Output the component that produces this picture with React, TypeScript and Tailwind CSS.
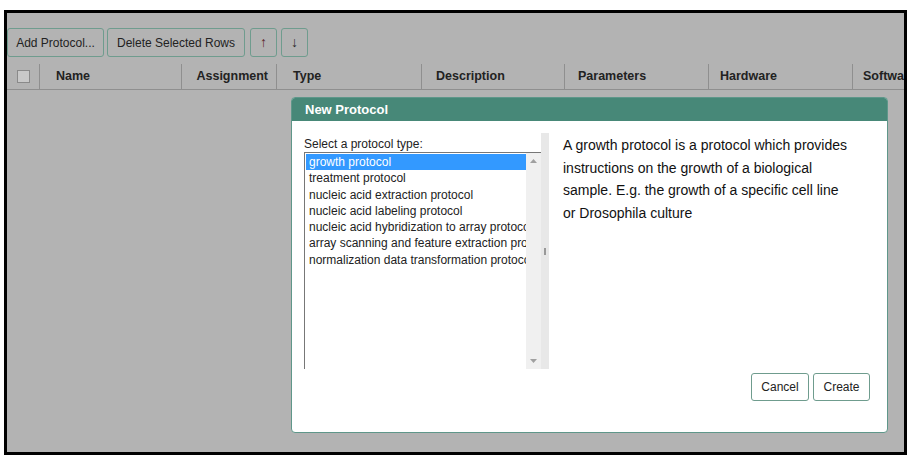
import React from "react";

const font = { fontFamily: '"Liberation Sans", Arial, sans-serif' };

const items = [
  "growth protocol",
  "treatment protocol",
  "nucleic acid extraction protocol",
  "nucleic acid labeling protocol",
  "nucleic acid hybridization to array protocol",
  "array scanning and feature extraction protocol",
  "normalization data transformation protocol",
];

export default function App() {
  return (
    <div className="w-[911px] h-[465px] bg-white relative overflow-hidden text-[#222]" style={font}>
      <div className="absolute left-[4px] top-[10px] w-[903px] h-[445px] border-[3px] border-black bg-[#b3b3b3] overflow-hidden">
        {/* toolbar */}
        <div className="flex gap-[3px] pt-[15px]">
          <button className="h-[29px] w-[97px] border border-[#6f9c8e] rounded-[3px] text-[12px] text-[#222]">Add Protocol...</button>
          <button className="h-[29px] w-[138px] border border-[#6f9c8e] rounded-[3px] text-[12px] text-[#222]">Delete Selected Rows</button>
          <button className="ml-[2px] h-[29px] w-[27px] border border-[#6f9c8e] rounded-[3px] text-[14px] text-[#5a2626]">↑</button>
          <button className="ml-[1px] h-[29px] w-[27px] border border-[#6f9c8e] rounded-[3px] text-[14px] text-[#2a2a2a]">↓</button>
        </div>
        {/* header */}
        <div className="mt-[7px] h-[26px] flex border-b border-[#8f8f8f] text-[12.5px] font-bold text-[#222] whitespace-nowrap">
          <div className="w-[33px] shrink-0 flex items-center justify-center border-r border-[#8f8f8f]">
            <div className="w-[13px] h-[13px] bg-[#c9c9c9] border border-[#8a8a8a]" />
          </div>
          <div className="w-[142px] shrink-0 flex items-center pl-[16px] border-r border-[#8f8f8f]">Name</div>
          <div className="w-[95px] shrink-0 flex items-center justify-end pr-[8px] border-r border-[#8f8f8f]">Assignment</div>
          <div className="w-[145px] shrink-0 flex items-center pl-[16px] border-r border-[#8f8f8f]">Type</div>
          <div className="w-[143px] shrink-0 flex items-center pl-[14px] border-r border-[#8f8f8f]">Description</div>
          <div className="w-[144px] shrink-0 flex items-center pl-[13px] border-r border-[#8f8f8f]">Parameters</div>
          <div className="w-[144px] shrink-0 flex items-center pl-[11px] border-r border-[#8f8f8f]">Hardware</div>
          <div className="w-[120px] shrink-0 flex items-center pl-[10px]">Software</div>
        </div>
      </div>

      {/* modal dialog */}
      <div className="absolute left-[291px] top-[97px] w-[597px] h-[336px] bg-white border border-[#5f978a] rounded-[4px] overflow-hidden flex flex-col">
        <div className="h-[23px] bg-[#478878] text-white font-bold text-[13px] flex items-center pl-[13px]">New Protocol</div>
        <div className="flex-1 flex pt-[12px]">
          <div className="w-[249px] pl-[12px] flex flex-col">
            <div className="text-[12px] h-[19px] pt-[2px]">Select a protocol type:</div>
            <div className="h-[217px] border-l border-t border-[#777] flex">
              <div className="flex-1 overflow-hidden pt-[1px] pl-[1px]">
                {items.map((t, i) => (
                  <div
                    key={t}
                    className={
                      "h-[16.3px] leading-[17px] text-[12px] pl-[3px] whitespace-nowrap overflow-hidden " +
                      (i === 0 ? "bg-[#3399ff] text-white" : "text-[#222]")
                    }
                  >
                    {t}
                  </div>
                ))}
              </div>
              <div className="w-[15px] bg-[#f0f0f0] flex flex-col items-center justify-between py-[6px]">
                <svg width="7" height="4" viewBox="0 0 7 4"><path d="M0 4 L3.5 0 L7 4 Z" fill="#a0a0a0" /></svg>
                <svg width="7" height="4" viewBox="0 0 7 4"><path d="M0 0 L3.5 4 L7 0 Z" fill="#a0a0a0" /></svg>
              </div>
            </div>
          </div>
          <div className="w-[8px] h-[236px] bg-[#e8e8e8] flex items-center justify-center">
            <div className="w-[2px] h-[7px] bg-[#999]" />
          </div>
          <div className="flex-1 flex flex-col">
            <div className="ml-[14px] w-[290px] text-[14px] leading-[22.7px] text-[#111] mt-[1px]">
              A growth protocol is a protocol which provides instructions on the growth of a biological sample. E.g. the growth of a specific cell line or Drosophila culture
            </div>
          </div>
        </div>
        <div className="absolute right-[17px] bottom-[31px] flex gap-[4px]">
          <button className="h-[28px] w-[58px] border border-[#6f9c8e] rounded-[3px] text-[12px] text-[#222] bg-white">Cancel</button>
          <button className="h-[28px] w-[57px] border border-[#6f9c8e] rounded-[3px] text-[12px] text-[#222] bg-white">Create</button>
        </div>
      </div>
    </div>
  );
}
